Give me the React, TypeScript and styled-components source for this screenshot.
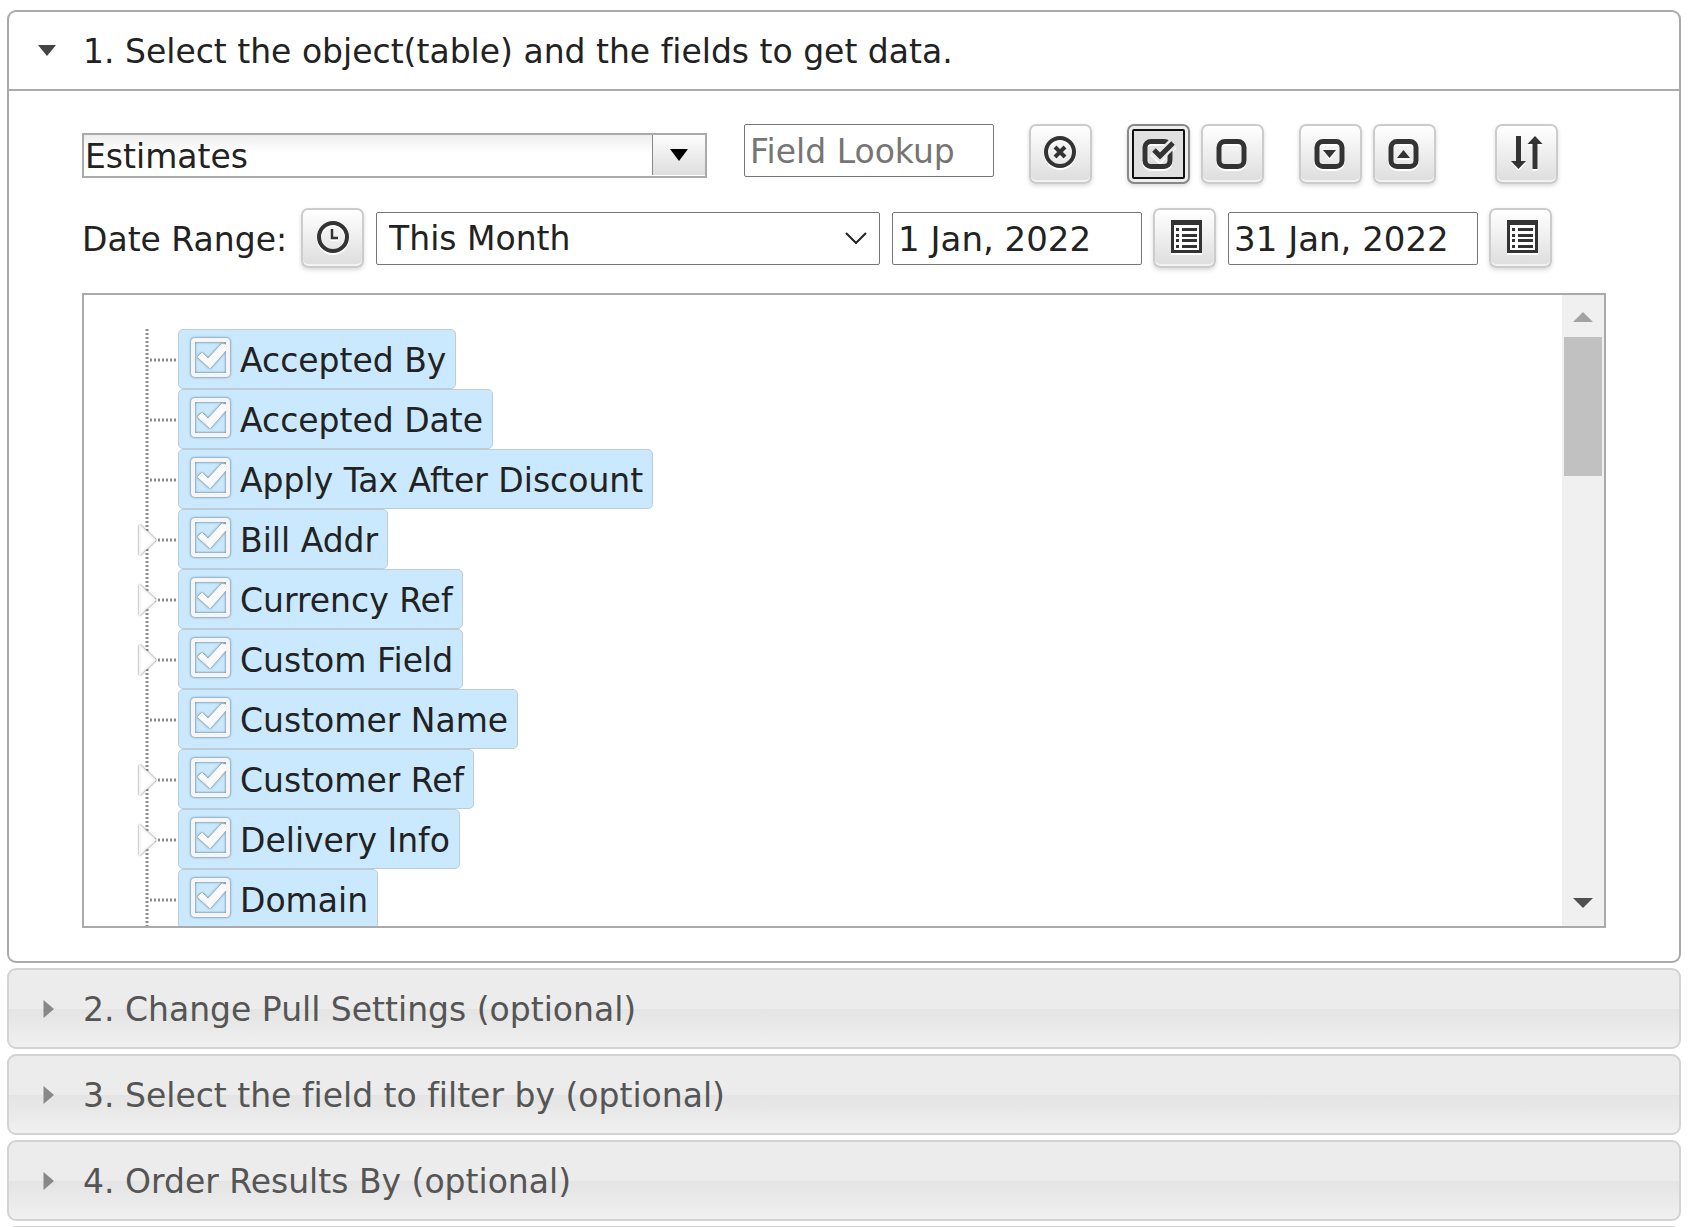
import React, { useState } from 'react';
import styled, { createGlobalStyle, css } from 'styled-components';

const Global = createGlobalStyle`
  *, *::before, *::after { box-sizing: border-box; }
  body { margin: 0; background: #fff; }
  body, button, input, select {
    font-family: Verdana, "DejaVu Sans", sans-serif;
    font-size: 33px;
    line-height: 40px;
    font-variant-ligatures: none;
    color: #222;
  }
`;

const Page = styled.main`
  display: flex;
  flex-direction: column;
  gap: 5px;
  padding: 10px 8px 0 7px;
  height: 100vh;
  overflow: hidden;
`;

const Heading = styled.h3`
  margin: 0;
  font-weight: 400;
  flex: none;
`;

const HeaderButton = styled.button<{ $open?: boolean }>`
  display: flex;
  align-items: center;
  width: 100%;
  height: 81px;
  margin: 0;
  padding: 2px 28px 0;
  text-align: left;
  border: 2px solid #d3d3d3;
  border-radius: 9px;
  background: linear-gradient(#ececec 0%, #ececec 50%, #e4e4e4 51%, #f0f0f0 100%);
  color: #555;
  ${(p) =>
    p.$open &&
    css`
      border-color: #aaa;
      border-radius: 9px 9px 0 0;
      background: #fff;
      color: #222;
    `}
`;

const Marker = styled.svg`
  width: 20px;
  height: 20px;
  margin-right: 26px;
  flex: none;
`;

const Content = styled.section`
  border: 2px solid #aaa;
  border-top: 0;
  border-radius: 0 0 9px 9px;
  padding: 33px 73px;
`;

const Row = styled.div`
  display: flex;
  align-items: center;
  height: 60px;
`;

const Combo = styled.div`
  display: flex;
  width: 625px;
  height: 45px;
  border: 2px solid #aaa;
  margin: 2px 37px 0 0;
  padding-bottom: 1px;
`;

const ComboInput = styled.input`
  flex: 1;
  min-width: 0;
  border: 0;
  padding: 4px 1px 0;
  outline: 0;
  background: linear-gradient(#eee 0, #fff 18px);
`;

const ComboArrow = styled.button`
  display: flex;
  align-items: center;
  justify-content: center;
  width: 53px;
  padding: 0;
  border: 0;
  border-left: 1px solid #888;
  background: linear-gradient(#fdfdfd, #dedede);
`;

const TextField = styled.input`
  width: 250px;
  height: 53px;
  padding: 2px 5px 0;
  border: 1px solid #767676;
  border-radius: 2px;
  background: #fff;
  &::placeholder { color: #757575; opacity: 1; }
`;

const LookupField = styled(TextField)`
  align-self: flex-start;
`;

const DateInput = styled(TextField)`
  font-size: 34px;
`;

const ToolButton = styled.button<{ $pressed?: boolean }>`
  display: flex;
  align-items: center;
  justify-content: center;
  flex: none;
  width: 63px;
  height: 60px;
  padding: 0;
  border: 2px solid #ccc;
  border-radius: 7px;
  background: linear-gradient(#fff, #ddd);
  box-shadow: 0 2px 4px rgba(0, 0, 0, 0.15), inset 0 -2px 0 rgba(255, 255, 255, 0.6);
  svg { filter: drop-shadow(0 2px 0 #fff); }
  ${(p) =>
    p.$pressed &&
    css`
      border-color: #888;
      background: #e0e0e0;
      outline: 2px solid #101010;
      outline-offset: -7px;
      box-shadow: 0 2px 4px rgba(0, 0, 0, 0.15), inset 0 0 0 3px #eee;
    `}
`;

const Group = styled.div<{ $left?: number }>`
  display: flex;
  align-items: center;
  gap: 11px;
  margin-left: ${(p) => p.$left ?? 0}px;
`;

const DateRow = styled(Row)`
  gap: 12px;
  margin-top: 24px;
`;

const RangeLabel = styled.label`
  padding: 4px 2px 0 0;
`;

const RangeBox = styled.div`
  display: grid;
  width: 504px;
  height: 53px;
  align-items: center;
  > * { grid-area: 1 / 1; }
  > svg { justify-self: end; margin-right: 13px; pointer-events: none; }
`;

const RangeSelect = styled.select`
  appearance: none;
  width: 100%;
  height: 53px;
  padding: 2px 12px 0;
  border: 1px solid #767676;
  border-radius: 2px;
  background: #fff;
`;

const TreeBox = styled.div`
  display: flex;
  height: 635px;
  margin-top: 25px;
  border: 2px solid #aaa;
`;

const TreeList = styled.ul`
  flex: 1;
  margin: 0;
  padding: 34px 0 0 50px;
  list-style: none;
  overflow: hidden;
`;

const TreeItem = styled.li`
  display: flex;
  height: 60px;
`;

const Branch = styled.svg`
  width: 44px;
  height: 60px;
  flex: none;
`;

const NodeLabel = styled.label`
  display: flex;
  align-items: center;
  gap: 8px;
  padding: 0 9px 0 10px;
  border: 1px solid #beccd8;
  border-radius: 5px;
  background: #cbe9fe;
`;

const NodeText = styled.span`
  padding-top: 4px;
`;

const NodeCheck = styled.span`
  display: grid;
  width: 43px;
  height: 44px;
  margin-bottom: 4px;
  > * { grid-area: 1 / 1; }
  input { appearance: none; margin: 0; width: 43px; height: 44px; }
  svg { pointer-events: none; filter: drop-shadow(0 0 1px #6f8b9e) drop-shadow(0 0 1px #9db4c4); }
`;

const Scrollbar = styled.div`
  display: flex;
  flex-direction: column;
  width: 42px;
  background: #f0f0f0;
`;

const ScrollButton = styled.button<{ $down?: boolean }>`
  display: flex;
  align-items: center;
  justify-content: center;
  width: 42px;
  height: 42px;
  padding: ${(p) => (p.$down ? '0 0 4px' : '2px 0 0')};
  border: 0;
  background: none;
`;

const ScrollTrack = styled.div`
  flex: 1;
  padding: 0 2px;
`;

const ScrollThumb = styled.div`
  height: 139px;
  background: #c1c1c1;
`;

const Icon = ({ children }: { children: React.ReactNode }) => (
  <svg width="34" height="36" viewBox="0 0 34 36" fill="none" stroke="#333" overflow="visible" aria-hidden="true">
    {children}
  </svg>
);

const ListIcon = () => (
  <Icon>
    <path d="M3 0h31v33h-31z" fill="#333" stroke="none" />
    <path d="M6 5h25v25h-25z" fill="#fff" stroke="none" />
    <path
      d="M8 9.500h3M8 15.500h3M8 20.500h3M8 26.500h3M14 9.500h15M14 15.500h15M14 20.500h15M14 26.500h15"
      strokeWidth="3"
    />
  </Icon>
);

const fields = [
  { name: 'Accepted By' },
  { name: 'Accepted Date' },
  { name: 'Apply Tax After Discount' },
  { name: 'Bill Addr', nested: true },
  { name: 'Currency Ref', nested: true },
  { name: 'Custom Field', nested: true },
  { name: 'Customer Name' },
  { name: 'Customer Ref', nested: true },
  { name: 'Delivery Info', nested: true },
  { name: 'Domain' },
];

const ExpandMark = styled.path`
  filter: drop-shadow(0 0 1px #777);
`;

const TreeNode = ({ name, nested }: { name: string; nested?: boolean }) => (
  <TreeItem>
    <Branch viewBox="0 0 44 60" aria-hidden="true">
      <path d="M13 0v60" stroke="#8c8c8c" strokeWidth="3" strokeDasharray="2 2" />
      <path d="M16 31h28" stroke="#8c8c8c" strokeWidth="3" strokeDasharray="2 2" />
      {nested && <ExpandMark d="M6 17L21 31L6 45z" fill="#fff" stroke="#f4f4f4" strokeWidth="2" strokeLinejoin="round" />}
    </Branch>
    <NodeLabel>
      <NodeCheck>
        <input type="checkbox" defaultChecked />
        <svg width="43" height="44" viewBox="0 0 43 44" fill="none" aria-hidden="true">
          <rect x="4" y="5" width="35" height="35" rx="2" stroke="#f4f5f6" strokeWidth="4" />
          <path d="M9 22l4-4 6 6L33 9l4 1v5L21 33z" fill="#fafafa" stroke="#fafafa" strokeLinejoin="round" />
        </svg>
      </NodeCheck>
      <NodeText>{name}</NodeText>
    </NodeLabel>
  </TreeItem>
);

const Section = ({ title, label }: { title?: string; label?: string }) => (
  <Heading>
    <HeaderButton type="button" aria-expanded="false" aria-label={label}>
      <Marker viewBox="0 0 20 20" aria-hidden="true">
        <path d="M6.500 0l10.500 9-10.500 9z" fill="#888" />
      </Marker>
      {title}
    </HeaderButton>
  </Heading>
);

export default function App() {
  const [object, setObject] = useState('Estimates');
  return (
    <>
      <Global />
      <Page>
        <div>
          <Heading>
            <HeaderButton type="button" $open aria-expanded="true">
              <Marker viewBox="0 0 20 20" aria-hidden="true">
                <path d="M1 3h18l-9 11z" fill="#444" />
              </Marker>
              1. Select the object(table) and the fields to get data.
            </HeaderButton>
          </Heading>
          <Content>
            <Row>
              <Combo>
                <ComboInput aria-label="Object" value={object} onChange={(e) => setObject(e.target.value)} />
                <ComboArrow type="button" aria-label="Show objects">
                  <svg width="18" height="12" aria-hidden="true"><path d="M0 0h18l-9 12z" fill="#000" /></svg>
                </ComboArrow>
              </Combo>
              <LookupField aria-label="Field Lookup" placeholder="Field Lookup" />
              <Group $left={35}>
                <ToolButton type="button" aria-label="Clear lookup">
                  <Icon>
                    <circle cx="16" cy="16" r="14" strokeWidth="4" />
                    <path d="M11 11l10 10M21 11l-10 10" strokeWidth="4" />
                  </Icon>
                </ToolButton>
              </Group>
              <Group $left={35}>
                <ToolButton type="button" $pressed aria-label="Check all">
                  <Icon>
                    <rect x="3" y="5.500" width="25" height="25" rx="6" strokeWidth="5" />
                    <path d="M12 14l6 6L31 7" stroke="#e8e8e8" strokeWidth="10" />
                    <path d="M12 14l6 6L31 7" strokeWidth="5" />
                  </Icon>
                </ToolButton>
                <ToolButton type="button" aria-label="Uncheck all">
                  <Icon><rect x="3" y="5.500" width="25" height="25" rx="6" strokeWidth="5" /></Icon>
                </ToolButton>
              </Group>
              <Group $left={35}>
                <ToolButton type="button" aria-label="Expand all">
                  <Icon>
                    <rect x="3" y="5.500" width="25" height="25" rx="6" strokeWidth="5" />
                    <path d="M9 14h13l-6.500 8z" fill="#333" stroke="none" />
                  </Icon>
                </ToolButton>
                <ToolButton type="button" aria-label="Collapse all">
                  <Icon>
                    <rect x="3" y="5.500" width="25" height="25" rx="6" strokeWidth="5" />
                    <path d="M9 22h13l-6.500-8z" fill="#333" stroke="none" />
                  </Icon>
                </ToolButton>
              </Group>
              <Group $left={59}>
                <ToolButton type="button" aria-label="Sort fields">
                  <Icon>
                    <path d="M8.500 0v26M25 33V7" strokeWidth="5" />
                    <path d="M1 25h15l-7.500 8zM17.500 8h15L25 0z" fill="#333" stroke="none" />
                  </Icon>
                </ToolButton>
              </Group>
            </Row>
            <DateRow>
              <RangeLabel htmlFor="range">Date Range:</RangeLabel>
              <ToolButton type="button" aria-label="Use current time">
                <Icon>
                  <circle cx="17" cy="17" r="14" strokeWidth="4" />
                  <path d="M16 9v9h6" strokeWidth="2.500" />
                </Icon>
              </ToolButton>
              <RangeBox>
                <RangeSelect id="range" defaultValue="This Month"><option>This Month</option></RangeSelect>
                <svg width="22" height="12" fill="none" stroke="#222" strokeWidth="2" aria-hidden="true"><path d="M1 1l10 10L21 1" /></svg>
              </RangeBox>
              <Group>
                <DateInput aria-label="From date" defaultValue="1 Jan, 2022" />
                <ToolButton type="button" aria-label="Pick from date"><ListIcon /></ToolButton>
              </Group>
              <Group>
                <DateInput aria-label="To date" defaultValue="31 Jan, 2022" />
                <ToolButton type="button" aria-label="Pick to date"><ListIcon /></ToolButton>
              </Group>
            </DateRow>
            <TreeBox>
              <TreeList>{fields.map((f) => <TreeNode key={f.name} {...f} />)}</TreeList>
              <Scrollbar>
                <ScrollButton type="button" aria-label="Scroll up">
                  <svg width="20" height="10" aria-hidden="true"><path d="M0 10L10 0l10 10z" fill="#a3a3a3" /></svg>
                </ScrollButton>
                <ScrollTrack><ScrollThumb /></ScrollTrack>
                <ScrollButton type="button" $down aria-label="Scroll down">
                  <svg width="20" height="10" aria-hidden="true"><path d="M0 0h20L10 10z" fill="#505050" /></svg>
                </ScrollButton>
              </Scrollbar>
            </TreeBox>
          </Content>
        </div>
        <Section title="2. Change Pull Settings (optional)" />
        <Section title="3. Select the field to filter by (optional)" />
        <Section title="4. Order Results By (optional)" />
        <Section label="More settings" />
      </Page>
    </>
  );
}
